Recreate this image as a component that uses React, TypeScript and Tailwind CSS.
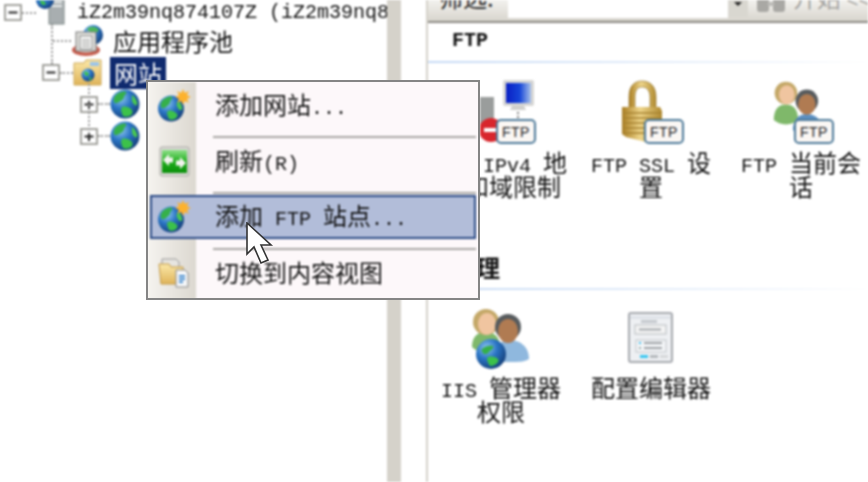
import React from "react";

const L = ({ children, b }: { children: React.ReactNode; b?: boolean }) => (
  <span className={`font-['Liberation_Mono',monospace] text-[20px] leading-none ${b ? "font-bold" : ""}`}>{children}</span>
);

const Defs = () => (
  <svg width="0" height="0" className="absolute">
    <defs>
      <radialGradient id="gb" cx="0.35" cy="0.3" r="0.8">
        <stop offset="0" stopColor="#8fc8f0" />
        <stop offset="0.45" stopColor="#2a74c4" />
        <stop offset="1" stopColor="#12386f" />
      </radialGradient>
      <linearGradient id="gold" x1="0" x2="1" y1="0" y2="0">
        <stop offset="0" stopColor="#a97d22" />
        <stop offset="0.45" stopColor="#eed58a" />
        <stop offset="1" stopColor="#b08a30" />
      </linearGradient>
      <linearGradient id="fold" x1="0" x2="0" y1="0" y2="1">
        <stop offset="0" stopColor="#fbe8a8" />
        <stop offset="1" stopColor="#dfb45a" />
      </linearGradient>
      <linearGradient id="green" x1="0" x2="0" y1="0" y2="1">
        <stop offset="0" stopColor="#8fe08a" />
        <stop offset="0.5" stopColor="#1fae1c" />
        <stop offset="1" stopColor="#0b8f0b" />
      </linearGradient>
      <linearGradient id="mon" x1="0" x2="1" y1="0" y2="0">
        <stop offset="0" stopColor="#0a1fc4" />
        <stop offset="0.55" stopColor="#1646d8" />
        <stop offset="1" stopColor="#a9c2ea" />
      </linearGradient>
    </defs>
  </svg>
);

const Globe = ({ s = 30 }: { s?: number }) => (
  <svg width={s} height={s} viewBox="0 0 30 30">
    <circle cx="15" cy="15" r="14.5" fill="url(#gb)" />
    <path d="M7 5c3-2 7-3 9-2 1 2-2 3-2 5s-3 4-5 5-4 2-5 0 0-6 3-8z" fill="#35b04a" />
    <path d="M12 18c3-1 7 0 9 2s2 4 0 6-5 2-8 1c-1-3-3-6-1-9z" fill="#3cc24a" />
    <path d="M22 6c2 1 4 4 5 7s-1 4-2 3-3-2-3-5 0-4 0-5z" fill="#4ac850" />
  </svg>
);

const GlobeStar = () => (
  <svg width="34" height="34" viewBox="0 0 34 34">
    <circle cx="14" cy="19.5" r="13" fill="url(#gb)" />
    <path d="M7 10c3-2 6-3 8-2 1 2-2 3-2 5s-3 4-4 5-4 2-5 0 0-6 3-8z" fill="#35b04a" />
    <path d="M11 22c3-1 6 0 8 2s2 3 0 5-5 2-7 1c-1-3-3-6-1-8z" fill="#3cc24a" />
    <path d="M21 12c2 1 3 3 4 6s-1 3-2 3-2-2-3-4 1-4 1-5z" fill="#4ac850" />
    <path d="M26 0l1.8 4 4-2-1.8 4.2 4 1.8-4 1.8 1.8 4-4-1.8L26 16l-1.8-4-4 1.8 1.8-4-4-1.8 4-1.8-1.8-4.2 4 2z" fill="#fdb22e" />
  </svg>
);

const Refresh = () => (
  <svg width="31" height="31" viewBox="0 0 31 31">
    <rect x="1" y="1" width="29" height="29" rx="2" fill="#d9d8d4" stroke="#aaa9a4" />
    <rect x="3" y="4" width="25" height="23" fill="url(#green)" />
    <path d="M4 14l6-6v3.5h4v5h-4V20z" fill="#f4f4f0" />
    <path d="M27 17l-6 6v-3.5h-4v-5h4V11z" fill="#f4f4f0" />
  </svg>
);

const ContentFolder = () => (
  <svg width="32" height="32" viewBox="0 0 32 32">
    <path d="M4 3h14l3 3v8H4z" fill="#e7e5e0" stroke="#999" />
    <path d="M1 8h10l2 3h12v17H3z" fill="url(#fold)" stroke="#c39a48" />
    <path d="M18 14h9l3 3v14H18z" fill="#f6f7f9" stroke="#8a8a8a" />
    <path d="M21 20h6M21 23h6M21 26h4" stroke="#4b8fd0" strokeWidth="1.8" />
  </svg>
);

const Server = () => (
  <svg width="30" height="26" viewBox="0 0 30 26">
    <rect x="13" y="-4" width="15" height="28" fill="#a8aeb0" stroke="#7f8a88" />
    <path d="M15 2h11M15 6h11" stroke="#e8ecec" strokeWidth="2" />
    <circle cx="9" cy="0" r="9" fill="url(#gb)" />
    <path d="M4 1c2-1 5 0 6 3-2 2-5 1-6-3z" fill="#3cc24a" />
  </svg>
);

const AppPool = () => (
  <svg width="34" height="32" viewBox="0 0 34 32">
    <ellipse cx="15" cy="25" rx="14" ry="6" fill="#c65a4a" />
    <ellipse cx="15" cy="23.5" rx="11" ry="4" fill="#e9e7e2" />
    <circle cx="22" cy="10" r="10" fill="url(#gb)" />
    <path d="M16 4c3-3 9-3 12 1-2 4-8 4-12-1z" fill="#4cb85a" />
    <rect x="5" y="7" width="20" height="19" fill="#dcdcd8" stroke="#777" />
    <rect x="9" y="11" width="12" height="13" fill="#fbfbfa" stroke="#8b8b8b" />
    <path d="M11 15h8M11 18h8M11 21h8" stroke="#888" />
  </svg>
);

const Folder = () => (
  <svg width="30" height="27" viewBox="0 0 30 27">
    <path d="M1 4h10l2-3h15v25H1z" fill="url(#fold)" stroke="#cda757" />
    <path d="M17 3h9v4h-9z" fill="#9cc4e8" />
    <circle cx="15" cy="16" r="6.5" fill="url(#gb)" />
    <path d="M11 13c2-1 4 0 5 2-1 3-4 3-5-2zM16 18l3 1-2 3z" fill="#3cc24a" />
  </svg>
);

const Expander = ({ open }: { open?: boolean }) => (
  <svg width="18" height="17" viewBox="0 0 18 17" className="shrink-0">
    <rect x="1" y="1" width="16" height="15" fill="#fff" stroke="#9a9a94" strokeWidth="1.8" />
    <path d="M4.5 8.5h9" stroke="#222" strokeWidth="2" />
    {!open && <path d="M9 4v9" stroke="#222" strokeWidth="2" />}
  </svg>
);

const Dots = ({ w }: { w: string }) => <span className={`${w} border-t-2 border-dotted border-[#999] shrink-0`} />;

const Badge = () => (
  <span className="absolute right-0 bottom-0 w-[40px] h-[25px] rounded-[5px] border-2 border-[#4e7a99] bg-[#fbf7f4] flex items-center justify-center font-['Liberation_Sans',sans-serif] text-[14px] leading-none text-[#222] tracking-[0.5px]">
    FTP
  </span>
);

const Ipv4Icon = () => (
  <span className="relative block w-[56px] h-[64px]">
    <svg width="56" height="64" viewBox="0 0 56 64" className="absolute left-0 top-0">
      <rect x="0" y="17" width="14" height="30" fill="#9a9d9c" />
      <rect x="23" y="0" width="31" height="26" rx="2" fill="#d6d6d4" />
      <rect x="26" y="3" width="25" height="20" fill="url(#mon)" />
      <path d="M32 26h12l2 4H30z" fill="#cfcfcc" />
      <path d="M38 32v6" stroke="#555" strokeWidth="1.5" strokeDasharray="2 2" />
      <circle cx="11" cy="50" r="12" fill="#d8262c" />
      <rect x="4" y="48" width="14" height="4" fill="#fff" />
    </svg>
    <Badge />
  </span>
);

const LockIcon = () => (
  <span className="relative block w-[63px] h-[64px]">
    <svg width="63" height="64" viewBox="0 0 63 64" className="absolute left-0 top-0">
      <path d="M8 30V17C8 6 13 1 21 1s14 5 14 16v13h-6V17c0-6-3-10-8-10s-7 4-7 10v13z" fill="url(#gold)" stroke="#8a6a20" strokeWidth="0.6" />
      <path d="M1 27h38l2 4v28l-16 3-20-5-4-3z" fill="url(#gold)" />
      <path d="M1 33h40M1 38h40M1 43h40M1 48h40M2 53h36" stroke="#a68232" strokeWidth="1.4" />
    </svg>
    <Badge />
  </span>
);

const People = () => (
  <svg width="62" height="62" viewBox="0 0 62 62">
    <path d="M2 40c0-11 6-15 14-15s14 5 14 15c-4 3-8 5-14 5S6 44 2 40z" fill="#7fb86a" />
    <circle cx="16" cy="15" r="13" fill="#c4a868" />
    <ellipse cx="17" cy="17" rx="9" ry="11" fill="#f0c5a0" />
    <path d="M24 52c0-13 7-19 16-19s19 6 19 19c-5 3-10 3-18 3s-12 0-17-3z" fill="#8fb8de" />
    <circle cx="38" cy="20" r="13" fill="#575b5e" />
    <ellipse cx="38" cy="24" rx="10" ry="12" fill="#b07b52" />
    <circle cx="21" cy="47" r="15" fill="url(#gb)" />
    <path d="M12 42c3-3 8-4 11-3 1 3-3 4-4 6s-5 3-6 1-2-2-1-4z" fill="#35b04a" />
    <path d="M18 50c4-1 8 0 10 2s-2 7-8 7c-2-3-4-7-2-9z" fill="#3cc24a" />
  </svg>
);

const SessionIcon = () => (
  <span className="relative block w-[62px] h-[64px]">
    <span className="absolute left-0 top-0">
      <svg width="54" height="54" viewBox="0 0 62 62">
        <path d="M2 46c0-13 6-18 14-18s14 5 14 18c-4 3-8 5-14 5S6 49 2 46z" fill="#7fb86a" />
        <circle cx="16" cy="15" r="13" fill="#c4a868" />
        <ellipse cx="17" cy="17" rx="9" ry="11" fill="#f0c5a0" />
        <path d="M24 58c0-13 7-19 16-19s18 6 18 19z" fill="#5c8fc0" />
        <circle cx="40" cy="24" r="13" fill="#575b5e" />
        <ellipse cx="40" cy="28" rx="10" ry="12" fill="#b07b52" />
      </svg>
    </span>
    <Badge />
  </span>
);

const ConfigIcon = () => (
  <svg width="46" height="52" viewBox="0 0 46 52">
    <rect x="1" y="1" width="43" height="49" rx="2" fill="#eef0f3" stroke="#a6a9ae" strokeWidth="2" />
    <path d="M2 4h41v3H2z" fill="#dfe3e8" />
    <path d="M13 8h16v3H13z" fill="#c5c9ce" />
    <rect x="7" y="13" width="31" height="9" fill="#f4f4f4" stroke="#b8bcc0" />
    <path d="M11 17.5h22" stroke="#a4a8ac" strokeWidth="2" />
    <rect x="8" y="28" width="30" height="12" fill="#f4f6f8" stroke="#c0c4c8" />
    <path d="M16 31h18M16 36h18" stroke="#9ea2a6" strokeWidth="2" />
    <rect x="11" y="30" width="2" height="2" fill="#39b8e8" />
    <rect x="11" y="35" width="2" height="2" fill="#9aa" />
    <rect x="12" y="43" width="8" height="3" fill="#39c6f0" />
    <rect x="22" y="43" width="8" height="3" fill="#b4b8bc" />
    <rect x="32" y="43" width="8" height="3" fill="#d6d8da" />
  </svg>
);

const Label = ({ lines }: { lines: React.ReactNode[] }) => (
  <div className="text-center text-[24px] whitespace-nowrap text-[#111]">
    {lines.map((l, i) => (
      <div key={i} className="h-[24px] leading-[24px]">{l}</div>
    ))}
  </div>
);

const Feature = ({ icon, lines, box, pt }: { icon: React.ReactNode; lines: React.ReactNode[]; box: string; pt: string }) => (
  <div className="flex flex-col items-center w-[150px] h-[119px]">
    <div className={`${box} flex items-center justify-center`}>{icon}</div>
    <div className={pt}>
      <Label lines={lines} />
    </div>
  </div>
);

const MenuItem = ({ icon, children, active, last }: { icon: React.ReactNode; children: React.ReactNode; active?: boolean; last?: boolean }) => (
  <>
    <div className={`h-[53px] flex ${active ? "items-start pt-[1px]" : last ? "items-center pb-[10px]" : "items-center pb-[6px]"}`}>
      <div className={`flex items-center w-[326px] ml-[2px] ${active ? "h-[44px] bg-[#b2bdd9] border-2 border-[#2c4b86]" : "h-full"}`}>
        <div className={`w-[44px] flex justify-center shrink-0 ${active ? "" : "ml-[2px]"}`}>{icon}</div>
        <div className={`ml-[19px] ${active ? "mt-[-2px]" : "mt-0"} text-[24px] leading-none whitespace-nowrap text-[#111]`}>{children}</div>
      </div>
    </div>
    {!last && <div className="ml-[65px] mr-[2px] h-[3px] py-[0.5px]"><div className="h-[2px] bg-[#a9a7a4]" /></div>}
  </>
);

const Row = ({ children, pl, h }: { children: React.ReactNode; pl: string; h: string }) => (
  <div className={`flex items-center ${pl} ${h}`}>{children}</div>
);

export default function App() {
  return (
    <div className="relative w-[868px] h-[482px] overflow-hidden bg-white">
      <Defs />
      <div className="flex w-full h-full blur-[0.8px] font-['Noto_Sans_CJK_SC','Liberation_Sans',sans-serif] text-[#111]">
        <div className="relative w-[387px] shrink-0 overflow-hidden">
          <span className="absolute left-[51px] top-[24px] h-[40px] border-l-2 border-dotted border-[#999]" />
          <span className="absolute left-[88px] top-[84px] h-[50px] border-l-2 border-dotted border-[#999]" />
          <Row pl="pl-[4px]" h="h-[25px]">
            <Expander open />
            <Dots w="w-[14px]" />
            <span className="self-start">
              <Server />
            </span>
            <span className="ml-[11px] mt-[-3px] whitespace-nowrap text-[#111]">
              <L>iZ2m39nq874107Z (iZ2m39nq874107Z\Administrator)</L>
            </span>
          </Row>
          <Row pl="pl-[53px]" h="h-[32px]">
            <Dots w="w-[18px]" />
            <AppPool />
            <span className="ml-[8px] text-[24px] leading-none">应用程序池</span>
          </Row>
          <Row pl="pl-[42px]" h="h-[31px]">
            <Expander open />
            <Dots w="w-[13px]" />
            <Folder />
            <span className="ml-[7px] h-[32px] w-[56px] bg-[#0f2a6e] text-white text-[24px] leading-[32px] text-center whitespace-nowrap">网站</span>
          </Row>
          <Row pl="pl-[80px]" h="h-[32px]">
            <Expander />
            <Dots w="w-[12px]" />
            <Globe />
          </Row>
          <Row pl="pl-[80px]" h="h-[32px]">
            <Expander />
            <Dots w="w-[12px]" />
            <Globe />
          </Row>
        </div>
        <div className="w-[14px] shrink-0 bg-[#d5d2ca]" />
        <div className="w-[25px] shrink-0" />
        <div className="flex-1 border-l-2 border-[#d5d2ca] overflow-hidden">
          <div className="h-[23px] border-b-2 border-[#8c8a85] bg-gradient-to-b from-[#f3f2ee] to-[#d8d5ce] flex items-start overflow-hidden">
            <span className="ml-[11px] w-[69px] shrink-0 text-[24px] leading-[24px] mt-[-15px] text-[#222]">筛选:</span>
            <div className="w-[220px] h-[18px] bg-white shrink-0" />
            <div className="w-[20px] h-[17px] bg-[#d9d7d0] shrink-0 flex justify-center items-start">
              <span className="mt-[2px] w-0 h-0 border-x-[4px] border-x-transparent border-t-[4px] border-t-[#222]" />
            </div>
            <svg width="30" height="14" viewBox="0 0 30 14" className="ml-[8px] shrink-0">
              <rect x="1" y="-3" width="12" height="15" rx="3" fill="#a9a8a4" />
              <rect x="17" y="-3" width="12" height="15" rx="3" fill="#a9a8a4" />
              <rect x="12" y="2" width="6" height="4" fill="#bdbcb8" />
            </svg>
            <span className="ml-[7px] text-[24px] leading-[24px] mt-[-15px] text-[#a4a3a0] whitespace-nowrap">开始 <L>&lt;&lt;</L></span>
          </div>
          <div className="h-[38px] pl-[24px] flex items-center">
            <span className="font-['Liberation_Mono',monospace] font-bold text-[20px] leading-none text-[#111] mt-[-2px]">FTP</span>
          </div>
          <div className="h-[2px] bg-gradient-to-r from-[#c6daf5] to-white" />
          <div className="ml-[-2px] mt-[17px] grid grid-cols-[150px_150px_150px]">
            <Feature box="h-[64px] w-[132px] pl-[14px]" pt="pt-[6px]" icon={<Ipv4Icon />} lines={[<><L>FTP IPv4 </L>地</>, "址和域限制"]} />
            <Feature box="h-[64px] w-[132px] pl-[3px]" pt="pt-[6px]" icon={<LockIcon />} lines={[<><L>FTP SSL </L>设</>, "置"]} />
            <Feature box="h-[64px] w-[132px] pl-[4px]" pt="pt-[6px]" icon={<SessionIcon />} lines={[<><L>FTP </L>当前会</>, "话"]} />
          </div>
          <div className="mt-[51px] h-[38px] pl-[24px] flex items-center">
            <span className="text-[24px] leading-none font-bold text-[#111] mt-[-4px]">管理</span>
          </div>
          <div className="h-[2px] bg-gradient-to-r from-[#c6daf5] to-white" />
          <div className="ml-[-2px] mt-[17px] grid grid-cols-[150px_150px_150px]">
            <Feature box="h-[62px] w-[132px]" pt="pt-[6px]" icon={<People />} lines={[<><L>IIS </L>管理器</>, "权限"]} />
            <Feature box="h-[62px] w-[132px]" pt="pt-[6px]" icon={<ConfigIcon />} lines={["配置编辑器"]} />
          </div>
        </div>
      </div>

      <div className="absolute left-[146px] top-[80px] w-[334px] h-[220px] border-2 border-[#858585] bg-[#fdf8fa] font-['Noto_Sans_CJK_SC','Liberation_Sans',sans-serif] overflow-hidden">
        <div className="blur-[0.8px]">
          <div className="absolute left-0 top-0 bottom-0 w-[48px] bg-gradient-to-r from-[#f5f3ef] to-[#dcd8d0]" />
          <div className="relative">
            <MenuItem icon={<GlobeStar />}>添加网站<L>...</L></MenuItem>
            <MenuItem icon={<Refresh />}>刷新<L>(R)</L></MenuItem>
            <MenuItem icon={<GlobeStar />} active>添加<L> FTP </L>站点<L>...</L></MenuItem>
            <MenuItem icon={<ContentFolder />} last>切换到内容视图</MenuItem>
          </div>
        </div>
      </div>

      <svg width="30" height="44" viewBox="0 0 30 44" className="absolute left-[246px] top-[222px] blur-[0.4px]">
        <path d="M1 1v31l7-7 7 16 7-3-7-15h10z" fill="#fff" stroke="#333" strokeWidth="1.6" />
      </svg>
    </div>
  );
}
